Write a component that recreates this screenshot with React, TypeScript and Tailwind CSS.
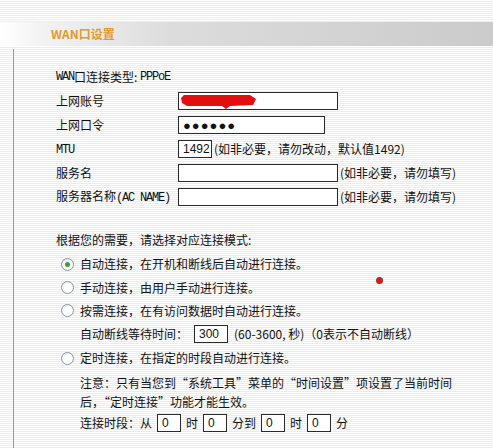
function Box({ w, children }: { w: string; children?: React.ReactNode }) {
  return (
    <div className={`relative flex h-[18px] items-center border border-[#2a2a2a] bg-white pl-[4px] font-['Liberation_Sans',sans-serif] text-[12px] ${w}`}>
      {children}
    </div>
  )
}

function Radio({ on }: { on?: boolean }) {
  return (
    <span className="mr-[6px] flex h-[13px] w-[13px] items-center justify-center rounded-full border border-[#8594a4] bg-[radial-gradient(circle_at_60%_60%,#ffffff_40%,#dfe3e8_100%)]">
      {on && <span className="h-[5px] w-[5px] rounded-full bg-[#3f9a45]" />}
    </span>
  )
}

function Mono({ children }: { children: React.ReactNode }) {
  return <span className="font-['Liberation_Mono',monospace] text-[12px] tracking-[-1.2px]">{children}</span>
}

function Row({ label, children }: { label: React.ReactNode; children: React.ReactNode }) {
  return (
    <div className="flex h-[24px] items-center">
      <div className="w-[122px]">{label}</div>
      {children}
    </div>
  )
}

export default function App() {
  return (
    <div className="relative h-[448px] w-[493px] overflow-hidden bg-[repeating-linear-gradient(to_bottom,#ffffff_0px,#ffffff_1px,#ececec_1px,#ececec_2px)] font-['Noto_Sans_CJK_SC',sans-serif] text-[12px] leading-none text-[#111]">
      <div className="mt-[22px] flex h-[24px] items-center bg-[linear-gradient(to_right,#ffffff_0%,#f3f3f3_8%,#dcdcdc_35%,#cbcbcb_100%)] pl-[51px] text-[12px] font-bold text-[#e39a2d]">
        WAN口设置
      </div>

      <div className="ml-[13px] mt-[3px] h-[400px] border-l border-[#9a9a9a] pl-[42px] pt-[16px]">
        <div className="flex h-[24px] items-center">
          <Mono>WAN</Mono>口连接类型:&nbsp;<Mono>PPPoE</Mono>
        </div>
        <Row label="上网账号">
          <Box w="w-[160px]">
            <svg className="absolute left-[1px] top-[2px]" width="78" height="14" viewBox="0 0 78 14">
              <path d="M1 3 L4 0 L70 0 L76 4 L73 10 L50 11 L46 14 L42 11 L7 11 L2 8 Z" fill="#e01010" />
            </svg>
          </Box>
        </Row>
        <Row label="上网口令">
          <Box w="w-[147px]">
            <span className="text-[13px] tracking-[1px]">●●●●●●</span>
          </Box>
        </Row>
        <Row label={<Mono>MTU</Mono>}>
          <Box w="w-[34px]">1492</Box>
          <span className="ml-[2px]">(如非必要，请勿改动，默认值1492)</span>
        </Row>
        <Row label="服务名">
          <Box w="w-[160px]" />
          <span className="ml-[2px]">(如非必要，请勿填写)</span>
        </Row>
        <Row label={<>服务器名称<Mono>(AC NAME)</Mono></>}>
          <Box w="w-[160px]" />
          <span className="ml-[2px]">(如非必要，请勿填写)</span>
        </Row>

        <div className="mt-[19px] flex h-[24px] items-center">根据您的需要，请选择对应连接模式:</div>
        <div className="flex h-[24px] items-center pl-[5px]">
          <Radio on />自动连接，在开机和断线后自动进行连接。
        </div>
        <div className="flex h-[23px] items-center pl-[5px]">
          <Radio />手动连接，由用户手动进行连接。
        </div>
        <div className="flex h-[23px] items-center pl-[5px]">
          <Radio />按需连接，在有访问数据时自动进行连接。
        </div>
        <div className="flex h-[24px] items-center pl-[24px]">
          自动断线等待时间：
          <span className="ml-[6px]" />
          <Box w="w-[34px]">300</Box>
          <span className="ml-[6px]">(60-3600, 秒)（0表示不自动断线）</span>
        </div>
        <div className="flex h-[24px] items-center pl-[5px]">
          <Radio />定时连接，在指定的时段自动进行连接。
        </div>
        <div className="pl-[24px] pt-[3px] leading-[19px]">
          注意：只有当您到“系统工具”菜单的“时间设置”项设置了当前时间
          <br />
          后，“定时连接”功能才能生效。
        </div>
        <div className="flex h-[24px] items-center pl-[24px]">
          连接时段：从
          <span className="ml-[5px]" />
          <Box w="w-[24px]">0</Box>
          <span className="mx-[5px]">时</span>
          <Box w="w-[24px]">0</Box>
          <span className="mx-[5px]">分到</span>
          <Box w="w-[24px]">0</Box>
          <span className="mx-[5px]">时</span>
          <Box w="w-[24px]">0</Box>
          <span className="ml-[5px]">分</span>
        </div>
      </div>

      <span className="absolute left-[376px] top-[277px] h-[7px] w-[7px] rounded-full bg-[#c8201a]" />
    </div>
  )
}
